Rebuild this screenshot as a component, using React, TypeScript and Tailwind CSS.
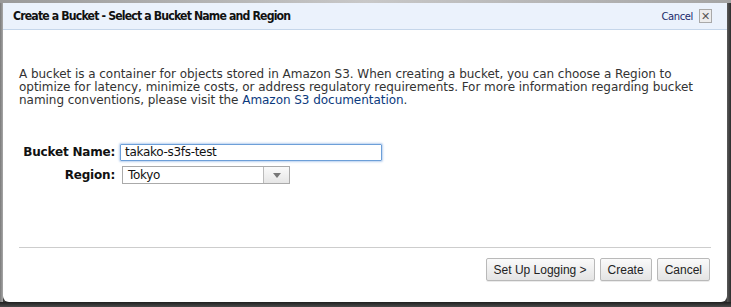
const body = "font-['DejaVu_Sans',Verdana,sans-serif]"

function Button({ label }: { label: string }) {
  return (
    <button className="h-[23px] px-[7px] border border-[#b9b9b9] rounded-[2px] bg-gradient-to-b from-[#fafafa] to-[#e4e4e4] text-[12px] text-[#222] font-['Liberation_Sans',Arial,sans-serif] shadow-[0_1px_0_rgba(0,0,0,0.08)]">
      {label}
    </button>
  )
}

export default function App() {
  return (
    <div className="w-[731px] h-[307px] bg-[#3a3a3a] overflow-hidden">
      <div className="h-[3px] bg-gradient-to-r from-[#9a9a9a] via-[#c8c8c8] to-[#a5a5a5]" />
      <div className="flex h-[299px]">
        <div className="w-[3px] bg-gradient-to-r from-[#7a7a7a] to-[#a8a8a8]" />
        <div className="w-[724px] bg-white rounded-b-[6px] flex flex-col">
          {/* title bar */}
          <div className="h-[27px] bg-[#ebf2fc] border-b border-[#c5d6ea] flex items-center justify-between pl-[10px] pr-[15px]">
            <h1 className="font-['DejaVu_Sans_Condensed','DejaVu_Sans',sans-serif] font-stretch-condensed font-bold text-[12.2px] tracking-[-0.85px] text-[#111]">
              Create a Bucket - Select a Bucket Name and Region
            </h1>
            <div className="flex items-center gap-[6px]">
              <span className={`${body} text-[10px] tracking-[-0.4px] text-[#1a2a6c]`}>Cancel</span>
              <span className="w-[13px] h-[14px] border border-[#a9a9a9] bg-[#ececec] flex items-center justify-center text-[#555] text-[11px] leading-none font-['DejaVu_Sans',sans-serif]">
                ✕
              </span>
            </div>
          </div>

          {/* description */}
          <p className={`${body} mt-[38px] px-[16px] text-[12px] leading-[13px] tracking-[-0.04px] text-[#333] whitespace-nowrap`}>
            A bucket is a container for objects stored in Amazon S3. When creating a bucket, you can choose a Region to
            <br />
            optimize for latency, minimize costs, or address regulatory requirements. For more information regarding bucket
            <br />
            naming conventions, please visit the <a className="text-[#0b3a7e]">Amazon S3 documentation</a>.
          </p>

          {/* form */}
          <div className={`${body} mt-[36px] grid grid-cols-[112px_auto] gap-x-[5px] gap-y-[5px] items-center text-[12px]`}>
            <label className="text-right font-bold tracking-[-0.2px] text-[#111]">Bucket Name:</label>
            <div className="w-[262px] h-[17px] border border-[#6d9fd8] rounded-[1px] shadow-[0_0_2px_1px_rgba(100,150,220,0.45)] flex items-center px-[4px] text-[#111] tracking-[-0.3px]">
              takako-s3fs-test
            </div>
            <label className="text-right font-bold tracking-[-0.2px] text-[#111]">Region:</label>
            <div className="ml-[2px] w-[168px] h-[18px] border border-[#aaa] flex items-stretch bg-white">
              <span className="flex-1 flex items-center px-[5px] text-[#111] tracking-[-0.3px]">Tokyo</span>
              <span className="w-[26px] border-l border-[#bbb] bg-gradient-to-b from-[#fafafa] to-[#e6e6e6] flex items-center justify-center">
                <svg width="8" height="5" viewBox="0 0 8 5"><path d="M0 0h8L4 5z" fill="#777" /></svg>
              </span>
            </div>
          </div>

          <div className="mt-auto mx-[16px] border-t border-[#cdcdcd]" />
          <div className="flex justify-end gap-[5px] pr-[17px] pt-[10px] pb-[21px]">
            <Button label="Set Up Logging >" />
            <Button label="Create" />
            <Button label="Cancel" />
          </div>
        </div>
        <div className="w-[4px] bg-gradient-to-r from-[#5a5a5a] to-[#2e2e2e]" />
      </div>
      <div className="h-[5px] bg-gradient-to-b from-[#202020] to-[#4a4a4a]" />
    </div>
  )
}
